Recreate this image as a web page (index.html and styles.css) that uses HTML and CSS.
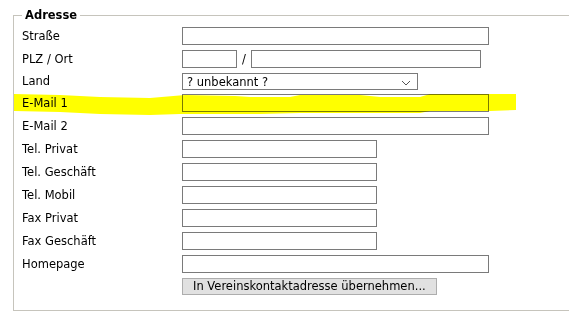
FILE: index.html
```html
<!DOCTYPE html>
<html lang="de">
<head>
  <meta charset="UTF-8">
  <title>Adresse</title>
  <link rel="stylesheet" href="styles.css">
</head>
<body>
  <fieldset class="adresse">
    <legend>Adresse</legend>

    <div class="row">
      <label for="strasse">Straße</label>
      <input type="text" id="strasse" class="w-long">
    </div>
    <div class="row">
      <label for="plz">PLZ / Ort</label>
      <input type="text" id="plz" class="w-plz">
      <span class="sep">/</span>
      <input type="text" id="ort" class="w-ort">
    </div>
    <div class="row row-select">
      <label for="land">Land</label>
      <div class="select">
        <span>? unbekannt ?</span>
        <svg width="10" height="6" viewBox="0 0 10 6"><path d="M1 1 L5 5 L9 1" fill="none" stroke="#555" stroke-width="1"/></svg>
      </div>
    </div>
    <div class="row">
      <label for="mail1">E-Mail 1</label>
      <input type="text" id="mail1" class="w-long">
    </div>
    <div class="row">
      <label for="mail2">E-Mail 2</label>
      <input type="text" id="mail2" class="w-long">
    </div>
    <div class="row">
      <label for="telp">Tel. Privat</label>
      <input type="text" id="telp" class="w-mid">
    </div>
    <div class="row">
      <label for="telg">Tel. Geschäft</label>
      <input type="text" id="telg" class="w-mid">
    </div>
    <div class="row">
      <label for="telm">Tel. Mobil</label>
      <input type="text" id="telm" class="w-mid">
    </div>
    <div class="row">
      <label for="faxp">Fax Privat</label>
      <input type="text" id="faxp" class="w-mid">
    </div>
    <div class="row">
      <label for="faxg">Fax Geschäft</label>
      <input type="text" id="faxg" class="w-mid">
    </div>
    <div class="row">
      <label for="hp">Homepage</label>
      <input type="text" id="hp" class="w-long">
    </div>
    <div class="row row-btn">
      <span class="spacer"></span>
      <button type="button">In Vereinskontaktadresse übernehmen...</button>
    </div>
  </fieldset>

  <!-- Textmarker-Strich ueber E-Mail 1 -->
  <svg class="marker" width="569" height="317" viewBox="0 0 569 317">
    <polygon fill="#ffff00" points="14,94 60,95 100,97 150,98 185,95 235,96 250,97 290,97 300,95 360,95 380,97 420,97 430,94 516,94 516,110 490,111 430,111 420,113 370,113 300,113 260,114 180,114 150,115 100,114 60,112 14,111"/>
  </svg>
</body>
</html>
```

FILE: styles.css
```css
html, body {
  margin: 0;
  background: #fff;
  overflow: hidden;
}
body {
  font-family: "DejaVu Sans", Verdana, sans-serif;
  font-size: 11.5px;
  color: #000;
  padding: 8px 0 0 13px;
  position: relative;
  height: 317px;
  box-sizing: border-box;
}
.adresse {
  margin: 0;
  width: 556px;
  box-sizing: border-box;
  border: 1px solid #c6c4bc;
  border-right: none;
  padding: 5px 8px 15px 8px;
}
legend {
  font-weight: bold;
  font-size: 11.5px;
  line-height: 14px;
  padding: 0 3px;
}
.row {
  display: flex;
  align-items: center;
  height: 18px;
  margin-bottom: 5px;
  white-space: nowrap;
}
.row label,
.row .spacer {
  width: 160px;
  flex: none;
  margin-top: -1px;
}
.row-select {
  height: 17px;
  margin-bottom: 4px;
}
.row-btn {
  height: 17px;
  margin-top: 1px;
  margin-bottom: 0;
}
input {
  box-sizing: border-box;
  height: 18px;
  border: 1px solid #7a7a7a;
  padding: 0 3px;
  margin: 0;
  font: inherit;
  background: #fff;
  flex: none;
}
.w-long { width: 307px; }
.w-mid { width: 195px; }
.w-plz { width: 55px; }
.w-ort { width: 230px; }
.sep {
  margin: 0 5px 0 5px;
  color: #000;
}
.select {
  box-sizing: border-box;
  width: 236px;
  height: 17px;
  border: 1px solid #7a7a7a;
  display: flex;
  align-items: center;
  justify-content: space-between;
  padding: 0 6px 0 4px;
  flex: none;
}
.select svg {
  margin-top: 3px;
}
button {
  box-sizing: border-box;
  height: 17px;
  padding: 0 10px;
  border: 1px solid #adadad;
  background: #e1e1e1;
  font: inherit;
  color: #000;
  line-height: 15px;
  flex: none;
}
.marker {
  position: absolute;
  left: 0;
  top: 0;
  mix-blend-mode: multiply;
  pointer-events: none;
}
```
